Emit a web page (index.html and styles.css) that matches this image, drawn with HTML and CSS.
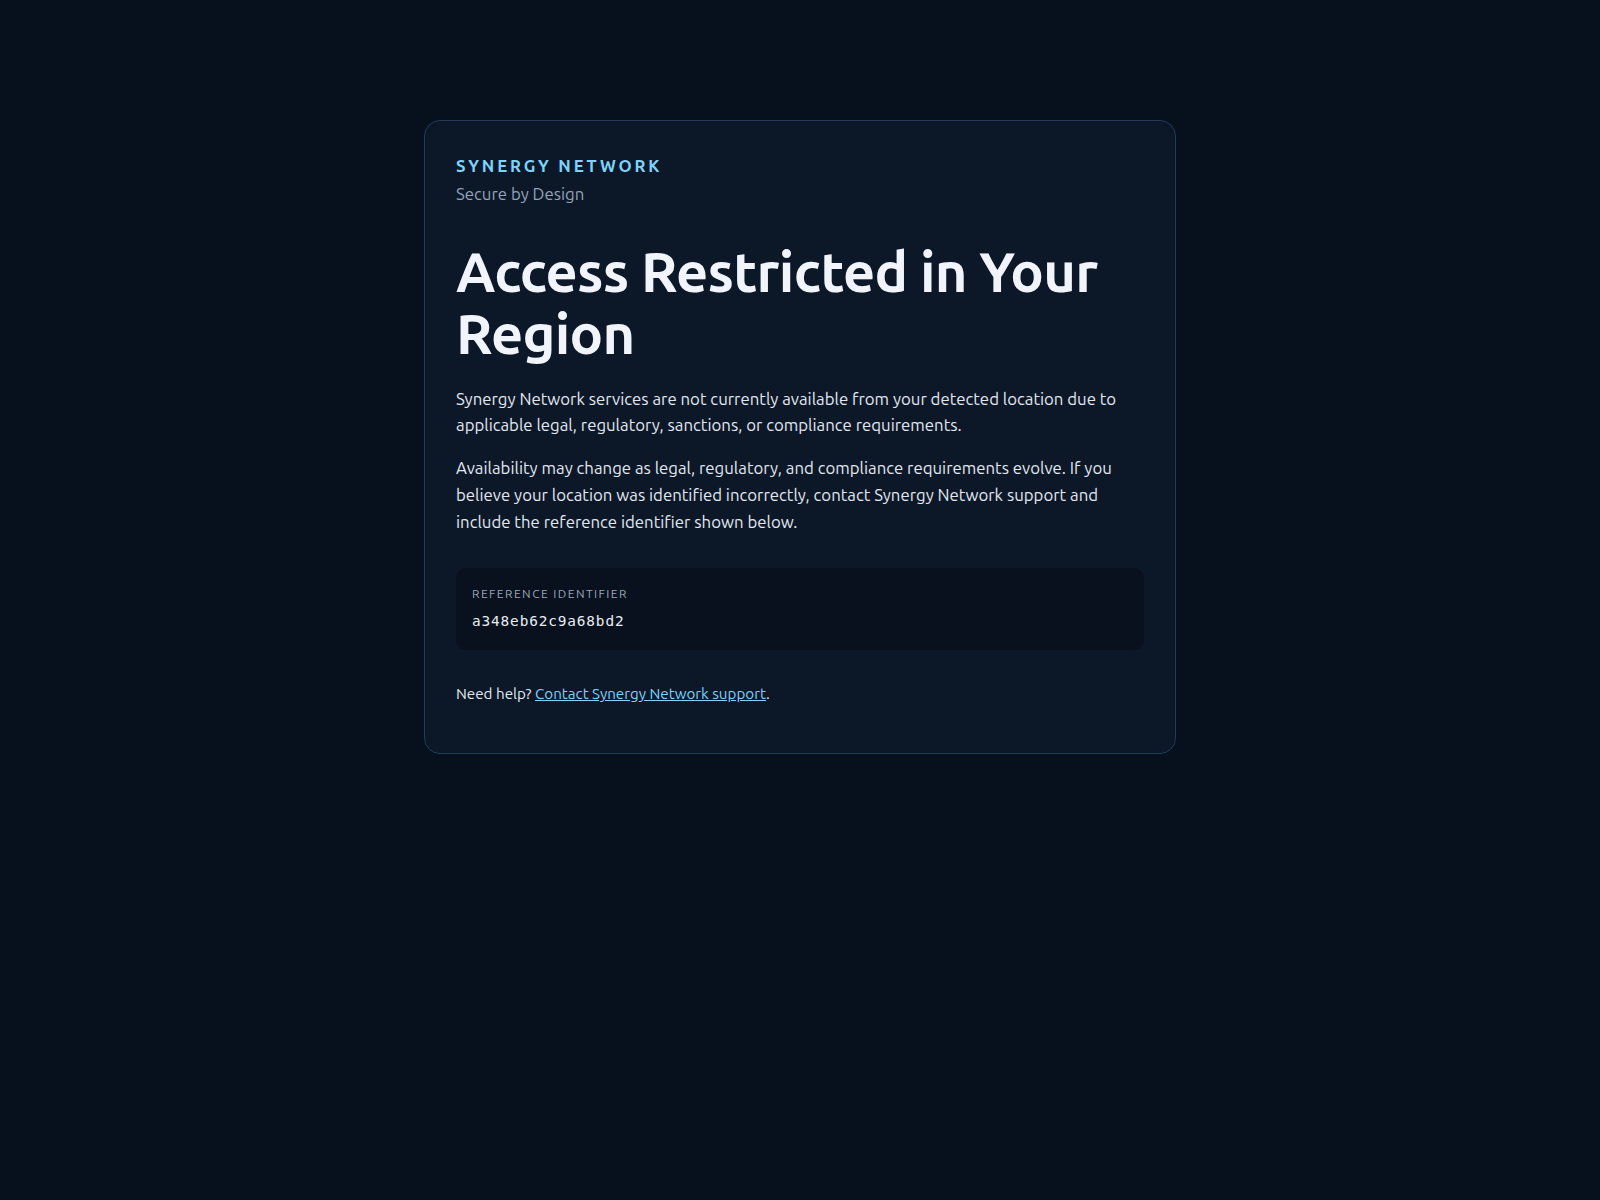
FILE: index.html
```html
<!DOCTYPE html>
<html lang="en">
<head>
<meta charset="utf-8">
<title>Access Restricted in Your Region</title>
<link rel="stylesheet" href="styles.css">
</head>
<body>
<main class="page">
  <section class="card">
    <header class="brand">
      <div class="brand-name">SYNERGY NETWORK</div>
      <div class="brand-tag">Secure by Design</div>
    </header>
    <h1 class="title">Access Restricted in Your Region</h1>
    <p class="text">Synergy Network services are not currently available from your detected location due to applicable legal, regulatory, sanctions, or compliance requirements.</p>
    <p class="text">Availability may change as legal, regulatory, and compliance requirements evolve. If you believe your location was identified incorrectly, contact Synergy Network support and include the reference identifier shown below.</p>
    <div class="ref">
      <div class="ref-label">REFERENCE IDENTIFIER</div>
      <div class="ref-code">a348eb62c9a68bd2</div>
    </div>
    <p class="help">Need help? <a href="#" class="help-link">Contact Synergy Network support</a>.</p>
  </section>
</main>
</body>
</html>
```

FILE: styles.css
```css
* { box-sizing: border-box; }
html, body { margin: 0; padding: 0; }
body {
  background: #07111e;
  color: #e2e8f0;
  font-family: "Ubuntu", "Noto Sans", "Open Sans", sans-serif;
}
.page {
  min-height: 1200px;
  padding: 120px 24px;
  display: flex;
  justify-content: center;
  align-items: flex-start;
}
.card {
  width: 752px;
  background: #0c1728;
  border: 1px solid #25395a;
  border-radius: 16px;
  padding: 32px 31px 47px;
}
.brand-name {
  color: #7dd3fc;
  font-weight: 700;
  font-size: 16.8px;
  letter-spacing: 0.17em;
  line-height: 25.2px;
}
.brand-tag {
  color: #94a3b8;
  font-size: 16.8px;
  line-height: 25.2px;
  margin-top: 3px;
}
.title {
  margin: 35px 0 21px;
  font-size: 56px;
  line-height: 1.1;
  font-weight: 700;
  letter-spacing: -0.013em;
  color: #f1f5fb;
}
.text {
  margin: 0 0 16px;
  font-size: 16.8px;
  line-height: 26.88px;
  color: #e2e8f0;
}
.ref {
  margin-top: 32px;
  background: #08111d;
  border-radius: 10px;
  padding: 16px 16px 18px;
}
.ref-label {
  font-size: 12px;
  letter-spacing: 0.12em;
  color: #9aa8bc;
  line-height: 20px;
}
.ref-code {
  margin-top: 6px;
  font-family: "DejaVu Sans Mono", monospace;
  font-size: 14.4px;
  line-height: 22px;
  color: #e8edf4;
  letter-spacing: 0.06em;
}
.help {
  margin: 32px 0 0;
  font-size: 15.2px;
  line-height: 24px;
  color: #e2e8f0;
}
.help-link {
  color: #7dd3fc;
  text-decoration: underline;
}
```
